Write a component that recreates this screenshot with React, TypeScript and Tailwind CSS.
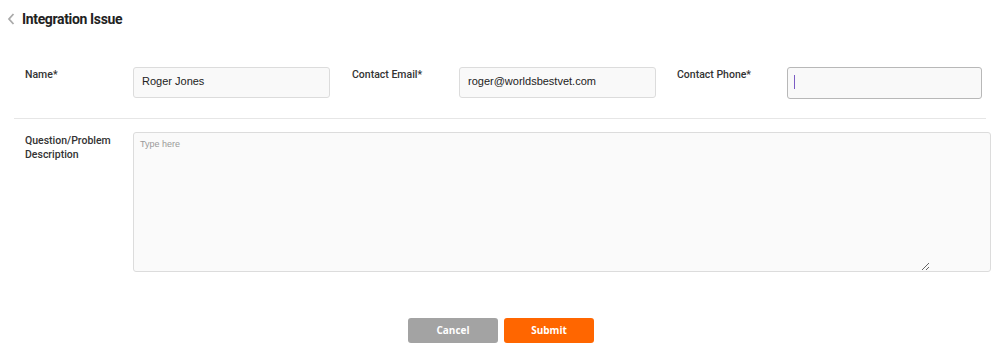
import React from 'react';

const labelCls = "text-[10.5px] font-medium text-[#333] leading-[14px] font-['Roboto',sans-serif]";
const inputCls =
  "h-[31px] w-[197px] rounded-[3px] border border-[#dcdcdc] bg-[#f9f9f9] px-[8px] text-[11px] text-[#222] outline-none font-['Liberation_Sans',Arial,sans-serif]";

export default function App() {
  return (
    <div className="w-[1000px] h-[348px] bg-white font-['Open_Sans',sans-serif]">
      <div className="flex items-center pl-[6px] pt-[8px] h-[22px] box-content">
        <svg width="11" height="14" viewBox="0 0 11 14" className="mr-[5px]">
          <path d="M7.5 2 L3 7 L7.5 12" fill="none" stroke="#aaa" strokeWidth="1.8" />
        </svg>
        <h1 className="text-[14px] font-bold text-[#222] tracking-[-0.35px] font-['Roboto',sans-serif]">Integration Issue</h1>
      </div>

      <div className="flex items-start pt-[37px] pl-[25px]">
        <div className={`${labelCls} w-[108px] pt-[1px]`}>Name*</div>
        <input className={`${inputCls} pb-[3px]`} defaultValue="Roger Jones" />
        <div className={`${labelCls} w-[107px] ml-[22px] pt-[1px]`}>Contact Email*</div>
        <input className={`${inputCls} pb-[3px]`} defaultValue="roger@worldsbestvet.com" />
        <div className={`${labelCls} w-[110px] ml-[21px] pt-[1px]`}>Contact Phone*</div>
        <div className="h-[32px] w-[195px] rounded-[3px] border border-[#b8b8b8] bg-[#f9f9f9] flex items-center pl-[6px]">
          <div className="w-[1px] h-[14px] mb-[3px] bg-[#7b5cc4]" />
        </div>
      </div>

      <div className="mx-[14px] mt-[19px] border-t border-[#e6e6e6]" />

      <div className="flex items-start pt-[13px] pl-[25px]">
        <div className={`${labelCls} w-[108px] pt-[2px]`}>
          Question/Problem
          <br />
          Description
        </div>
        <div className="w-[858px] h-[140px] rounded-[3px] border border-[#dcdcdc] bg-[#fafafa]">
          <textarea
            placeholder="Type here"
            className="block w-[796px] h-[138px] bg-transparent px-[6px] py-[5px] text-[9px] text-[#444] placeholder:text-[#999] outline-none resize font-['Liberation_Sans',Arial,sans-serif]"
          />
        </div>
      </div>

      <div className="flex justify-center gap-[6px] pt-[46px] pl-[2px]">
        <button className="w-[90px] h-[25px] rounded-[3px] bg-[#a3a3a3] text-white text-[10px] font-bold">Cancel</button>
        <button className="w-[90px] h-[25px] rounded-[3px] bg-[#ff6600] text-white text-[10px] font-bold">Submit</button>
      </div>
    </div>
  );
}
